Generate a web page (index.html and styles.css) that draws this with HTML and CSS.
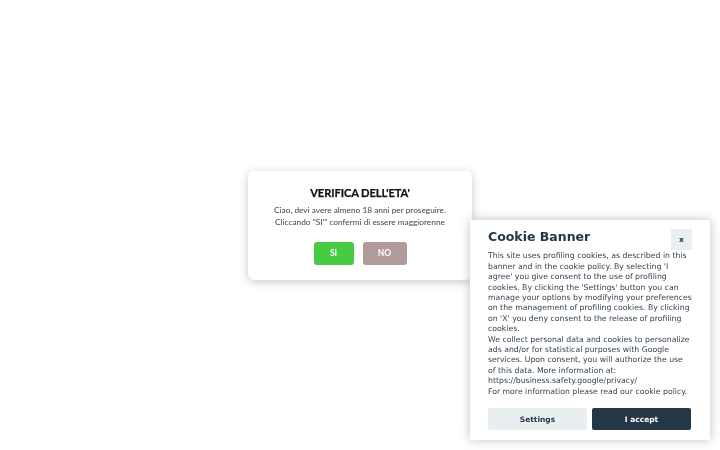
FILE: index.html
```html
<!DOCTYPE html>
<html lang="it">
<head>
<meta charset="utf-8">
<title>Verifica età</title>
<link rel="stylesheet" href="styles.css">
</head>
<body>
<div class="age-overlay">
  <div class="age-modal">
    <h2 class="age-title">VERIFICA DELL'ETA'</h2>
    <p class="age-text">Ciao, devi avere almeno 18 anni per proseguire.<br>Cliccando "SI'" confermi di essere maggiorenne</p>
    <div class="age-actions">
      <button class="age-btn age-yes">SI</button>
      <button class="age-btn age-no">NO</button>
    </div>
  </div>
</div>
<div class="cookie-banner">
  <div class="cookie-head">
    <h3 class="cookie-title">Cookie Banner</h3>
    <button class="cookie-close">x</button>
  </div>
  <p class="cookie-text">This site uses profiling cookies, as described in this banner and in the cookie policy. By selecting 'I agree' you give consent to the use of profiling cookies. By clicking the 'Settings' button you can manage your options by modifying your preferences on the management of profiling cookies. By clicking on 'X' you deny consent to the release of profiling cookies.<br>We collect personal data and cookies to personalize ads and/or for statistical purposes with Google services. Upon consent, you will authorize the use of this data. More information at: https://business.safety.google/privacy/<br>For more information please read our cookie policy.</p>
  <div class="cookie-actions">
    <button class="cookie-btn cookie-settings">Settings</button>
    <button class="cookie-btn cookie-accept">I accept</button>
  </div>
</div>
</body>
</html>
```
FILE: styles.css
```css
html, body {
  margin: 0;
  padding: 0;
  background: #ffffff;
  width: 720px;
  height: 450px;
  overflow: hidden;
}
.age-overlay {
  position: fixed;
  inset: 0;
  display: flex;
  align-items: center;
  justify-content: center;
}
.age-modal {
  width: 224px;
  box-sizing: border-box;
  padding: 14px 10px 15px;
  background: #fff;
  border-radius: 6px;
  box-shadow: 0 2px 10px rgba(0,0,0,0.22);
  text-align: center;
  font-family: Lato, "Open Sans", sans-serif;
}
.age-title {
  margin: 0;
  font-size: 11.2px;
  font-weight: 700;
  letter-spacing: -0.1px;
  color: #111;
  line-height: 16px;
  -webkit-text-stroke: 0.25px #111;
}
.age-text {
  margin: 3px 0 0;
  font-size: 8.3px;
  line-height: 12px;
  color: #444;
}
.age-actions {
  margin-top: 14px;
  display: flex;
  justify-content: center;
  gap: 9px;
}
.age-btn {
  border: 0;
  border-radius: 3px;
  height: 23px;
  color: #fff;
  font-family: Lato, sans-serif;
  font-weight: 700;
  font-size: 8.5px;
  padding: 0;
}
.age-yes { width: 40px; background: #47cb43; }
.age-no { width: 44px; background: #b09a9a; }

.cookie-banner {
  position: fixed;
  right: 10px;
  bottom: 10px;
  width: 240px;
  box-sizing: border-box;
  padding: 9px 18px 10px;
  background: #fff;
  box-shadow: 0 0 10px rgba(0,0,0,0.25);
  font-family: "DejaVu Sans", sans-serif;
}
.cookie-head {
  display: flex;
  justify-content: space-between;
  align-items: flex-start;
}
.cookie-title {
  margin: 0;
  padding-top: 0;
  font-size: 12.5px;
  font-weight: 700;
  color: #253646;
  line-height: 15px;
}
.cookie-close {
  width: 21px;
  height: 21px;
  margin-right: 0;
  border: 0;
  background: #e9eef1;
  color: #253646;
  font-family: "DejaVu Sans", sans-serif;
  font-weight: 700;
  font-size: 7.5px;
  padding: 0;
}
.cookie-text {
  margin: 1px 0 0;
  font-size: 7.75px;
  line-height: 10.4px;
  color: #3a4550;
}
.cookie-actions {
  margin: 11px 1px 0 0;
  display: flex;
  gap: 5px;
}
.cookie-btn {
  flex: 1;
  height: 22px;
  border: 0;
  border-radius: 2px;
  font-family: "DejaVu Sans", sans-serif;
  font-weight: 700;
  font-size: 7.5px;
  padding: 0;
}
.cookie-settings { background: #e9eef1; color: #253646; }
.cookie-accept { background: #253746; color: #fff; }
```
